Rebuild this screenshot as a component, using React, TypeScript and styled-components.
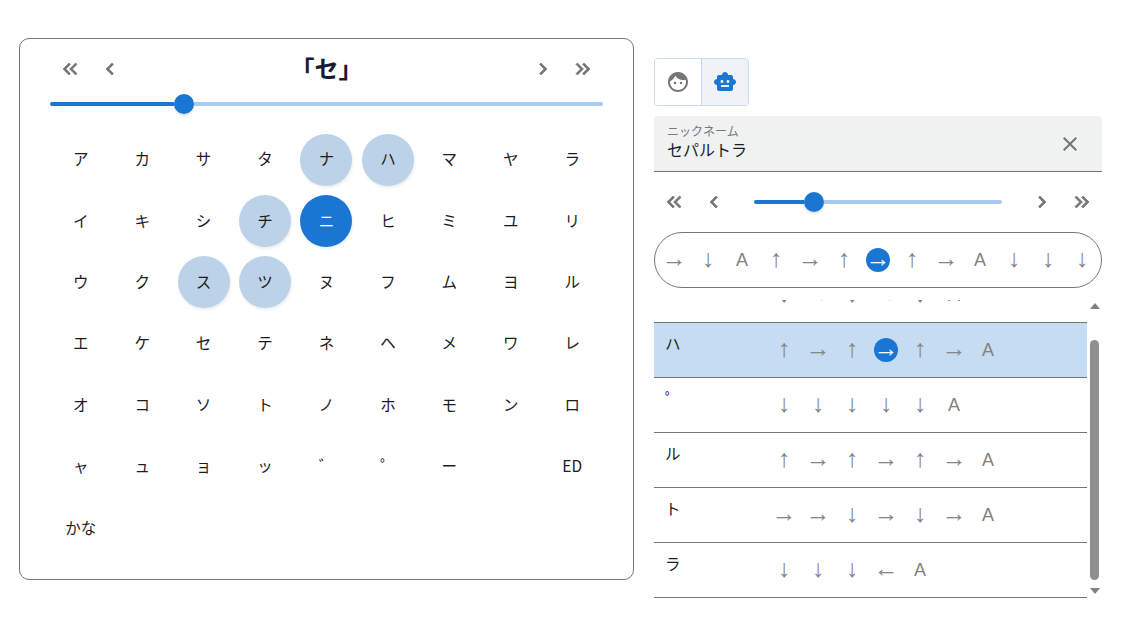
import React from 'react';
import styled, { createGlobalStyle } from 'styled-components';
import {
  MdChevronLeft,
  MdChevronRight,
  MdClose,
  MdFace,
  MdKeyboardDoubleArrowLeft,
  MdKeyboardDoubleArrowRight,
  MdSmartToy
} from 'react-icons/md';

const GlobalStyle = createGlobalStyle`
  html, body {
    margin: 0;
    padding: 0;
    background: #fff;
    font-family: Roboto, "Noto Sans CJK JP", "Liberation Sans", sans-serif;
    color: #1c1b1f;
  }
`;

const Page = styled.div`
  display: flex;
  align-items: flex-start;
  gap: 20px;
  width: 1135px;
  height: 634px;
  padding: 38px 0 0 19px;
  box-sizing: border-box;
  overflow: hidden;
`;

const Card = styled.section`
  width: 615px;
  height: 542px;
  box-sizing: border-box;
  padding: 10px 30px;
  border: 1px solid #79747e;
  border-radius: 10px;
`;

const NavRow = styled.div`
  display: flex;
  align-items: center;
  height: 40px;
`;

const NavButton = styled.button`
  flex: none;
  display: flex;
  align-items: center;
  justify-content: center;
  width: 40px;
  height: 40px;
  padding: 0;
  border: 0;
  background: none;
  color: #757575;
  font-size: 24px;

  /* chevrons are a bit heavier than the stock icon */
  svg path {
    stroke-width: 0.7;
  }
  svg path[fill='none'] {
    stroke-width: 0;
  }
`;

const Title = styled.h2`
  flex: 1;
  margin: 0;
  padding-top: 2px;
  text-align: center;
  font-size: 24px;
  font-weight: 700;
  line-height: 38px;
  color: #1a1a2e;
`;

const SliderTrack = styled.div<{ $inset?: number }>`
  flex: 1;
  display: flex;
  align-items: center;
  height: 20px;
  margin: 0 ${(p) => p.$inset ?? 0}px;
`;

const SliderFill = styled.div`
  height: 4px;
  background: #1976d2;
  border-radius: 2px 0 0 2px;
`;

const SliderThumb = styled.div`
  flex: none;
  width: 20px;
  height: 20px;
  border-radius: 50%;
  background: #1976d2;
  box-shadow: 0 2px 3px rgba(0, 0, 0, 0.12);
`;

const SliderRest = styled.div`
  flex: 1;
  height: 4px;
  background: #a6cbf1;
  border-radius: 0 2px 2px 0;
`;

const CardSlider = styled.div`
  display: flex;
  height: 20px;
  margin: 5px 0 15px;
`;

const KanaGrid = styled.div`
  display: grid;
  grid-template-columns: repeat(9, 61.44px);
  grid-auto-rows: 61.4px;
`;

const KanaCell = styled.div<{ $state?: 'near' | 'active' }>`
  align-self: center;
  justify-self: center;
  display: flex;
  align-items: center;
  justify-content: center;
  box-sizing: border-box;
  width: 52px;
  height: 52px;
  padding-bottom: 3px;
  border-radius: 50%;
  font-family: "Noto Sans CJK JP", Roboto, sans-serif;
  font-size: 15.5px;
  background: ${(p) => (p.$state === 'active' ? '#1976d2' : p.$state === 'near' ? '#bcd2e9' : 'transparent')};
  color: ${(p) => (p.$state === 'active' ? '#fff' : '#1c1b1f')};
  box-shadow: ${(p) => (p.$state ? '1px 2px 3px rgba(0, 0, 0, 0.07)' : 'none')};
`;

const Side = styled.aside`
  display: flex;
  flex-direction: column;
  width: 448px;
  padding-top: 20px;
`;

const ModeToggle = styled.div`
  display: flex;
  align-self: flex-start;
  height: 48px;
  margin-bottom: 10px;
  border: 1px solid #c9dbec;
  border-radius: 4px;
  box-sizing: border-box;
  overflow: hidden;
`;

const ModeButton = styled.div<{ $on?: boolean }>`
  display: flex;
  align-items: center;
  justify-content: center;
  box-sizing: border-box;
  width: ${(p) => (p.$on ? 47 : 46)}px;
  font-size: 24px;
  background: ${(p) => (p.$on ? '#eff3f7' : '#fff')};
  color: ${(p) => (p.$on ? '#1976d2' : '#757575')};
  border-left: ${(p) => (p.$on ? '1px solid #c3d7ea' : '0')};
`;

const NameField = styled.div`
  display: flex;
  align-items: center;
  justify-content: space-between;
  height: 56px;
  box-sizing: border-box;
  padding: 0 20px 0 13px;
  background: #f0f2f2;
  border-bottom: 1px solid #757575;
  border-radius: 4px 4px 0 0;
`;

const FieldLabel = styled.div`
  margin-top: -1px;
  font-size: 12px;
  line-height: 14px;
  color: #79747e;
`;

const FieldValue = styled.div`
  margin-top: 1px;
  font-size: 16px;
  line-height: 22px;
`;

const CloseIcon = styled(MdClose)`
  font-size: 24px;
  color: #757575;
`;

const SideNav = styled(NavRow)`
  margin: 10px 0;
`;

const Pill = styled.div`
  display: flex;
  align-items: center;
  justify-content: center;
  height: 56px;
  box-sizing: border-box;
  border: 1px solid #79747e;
  border-radius: 28px;
  margin-bottom: 12px;
`;

const Step = styled.span`
  flex: none;
  display: flex;
  align-items: center;
  justify-content: center;
  width: 34px;
  height: 24px;
`;

const StepGlyph = styled.span<{ $on?: boolean; $letter?: boolean }>`
  display: flex;
  align-items: center;
  justify-content: center;
  box-sizing: border-box;
  width: 24px;
  height: 24px;
  padding-bottom: ${(p) => (p.$letter ? 0 : 4)}px;
  border-radius: 50%;
  font-family: "Liberation Sans", sans-serif;
  font-size: ${(p) => (p.$letter ? 18 : 25)}px;
  line-height: 20px;
  background: ${(p) => (p.$on ? '#1976d2' : 'transparent')};
  color: ${(p) => (p.$on ? '#fff' : p.$letter ? '#85817c' : '#858585')};
`;

const ListFrame = styled.div`
  display: flex;
  height: 298px;
`;

const List = styled.div`
  flex: 1;
  min-width: 0;
  height: 298px;
  overflow: hidden;
`;

const ListInner = styled.div`
  margin-top: -32px;
`;

const Row = styled.div<{ $on?: boolean }>`
  display: flex;
  height: 55px;
  box-sizing: border-box;
  padding-left: 11px;
  border-bottom: 1px solid #757575;
  background: ${(p) => (p.$on ? '#c5dcf3' : 'transparent')};
`;

const RowLabel = styled.div`
  flex: none;
  width: 102px;
  padding-top: 12px;
  font-size: 15.5px;
  line-height: 20px;
`;

const RowSteps = styled.div`
  display: flex;
  align-items: center;
`;

const ScrollTrack = styled.div`
  flex: none;
  display: flex;
  flex-direction: column;
  align-items: center;
  width: 15px;
`;

const ScrollUp = styled.div`
  width: 0;
  height: 0;
  margin-top: 3px;
  border: 5px solid transparent;
  border-top: 0;
  border-bottom: 6px solid #808080;
`;

const ScrollThumb = styled.div`
  width: 9px;
  height: 240px;
  margin-top: 31px;
  border-radius: 5px;
  background: #8f8f8f;
`;

const ScrollDown = styled.div`
  width: 0;
  height: 0;
  margin-top: 8px;
  border: 5px solid transparent;
  border-bottom: 0;
  border-top: 6px solid #808080;
`;

const kana = [
  'ア', 'カ', 'サ', 'タ', 'ナ', 'ハ', 'マ', 'ヤ', 'ラ',
  'イ', 'キ', 'シ', 'チ', 'ニ', 'ヒ', 'ミ', 'ユ', 'リ',
  'ウ', 'ク', 'ス', 'ツ', 'ヌ', 'フ', 'ム', 'ヨ', 'ル',
  'エ', 'ケ', 'セ', 'テ', 'ネ', 'ヘ', 'メ', 'ワ', 'レ',
  'オ', 'コ', 'ソ', 'ト', 'ノ', 'ホ', 'モ', 'ン', 'ロ',
  'ャ', 'ュ', 'ョ', 'ッ', '゛', '゜', 'ー', '', 'ED',
  'かな'
];

const near = ['ナ', 'ハ', 'チ', 'ス', 'ツ'];

const rows = [
  { label: 'ヒ', steps: '↓→↓→↓A' },
  { label: 'ハ', steps: '↑→↑→↑→A', current: 3 },
  { label: '゜', steps: '↓↓↓↓↓A' },
  { label: 'ル', steps: '↑→↑→↑→A' },
  { label: 'ト', steps: '→→↓→↓→A' },
  { label: 'ラ', steps: '↓↓↓←A' }
];

function Steps({ steps, current }: { steps: string; current?: number }) {
  return (
    <>
      {[...steps].map((s, i) => (
        <Step key={i}>
          <StepGlyph $on={i === current} $letter={s === 'A'}>{s}</StepGlyph>
        </Step>
      ))}
    </>
  );
}

function Slider({ percent, inset }: { percent: number; inset?: number }) {
  return (
    <SliderTrack $inset={inset}>
      <SliderFill style={{ width: `${percent}%` }} />
      <SliderThumb />
      <SliderRest />
    </SliderTrack>
  );
}

export default function App() {
  return (
    <Page>
      <GlobalStyle />
      <Card>
        <NavRow>
          <NavButton><MdKeyboardDoubleArrowLeft /></NavButton>
          <NavButton><MdChevronLeft /></NavButton>
          <Title>「セ」</Title>
          <NavButton><MdChevronRight /></NavButton>
          <NavButton><MdKeyboardDoubleArrowRight /></NavButton>
        </NavRow>
        <CardSlider>
          <Slider percent={22.4} />
        </CardSlider>
        <KanaGrid>
          {kana.map((k, i) => (
            <KanaCell key={i} $state={k === 'ニ' ? 'active' : near.includes(k) ? 'near' : undefined}>
              {k}
            </KanaCell>
          ))}
        </KanaGrid>
      </Card>
      <Side>
        <ModeToggle>
          <ModeButton><MdFace /></ModeButton>
          <ModeButton $on><MdSmartToy /></ModeButton>
        </ModeToggle>
        <NameField>
          <div>
            <FieldLabel>ニックネーム</FieldLabel>
            <FieldValue>セパルトラ</FieldValue>
          </div>
          <CloseIcon />
        </NameField>
        <SideNav>
          <NavButton><MdKeyboardDoubleArrowLeft /></NavButton>
          <NavButton><MdChevronLeft /></NavButton>
          <Slider percent={20} inset={20} />
          <NavButton><MdChevronRight /></NavButton>
          <NavButton><MdKeyboardDoubleArrowRight /></NavButton>
        </SideNav>
        <Pill>
          <Steps steps="→↓A↑→↑→↑→A↓↓↓" current={6} />
        </Pill>
        <ListFrame>
          <List>
            <ListInner>
              {rows.map((r) => (
                <Row key={r.label} $on={r.current !== undefined}>
                  <RowLabel>{r.label}</RowLabel>
                  <RowSteps>
                    <Steps steps={r.steps} current={r.current} />
                  </RowSteps>
                </Row>
              ))}
            </ListInner>
          </List>
          <ScrollTrack>
            <ScrollUp />
            <ScrollThumb />
            <ScrollDown />
          </ScrollTrack>
        </ListFrame>
      </Side>
    </Page>
  );
}
